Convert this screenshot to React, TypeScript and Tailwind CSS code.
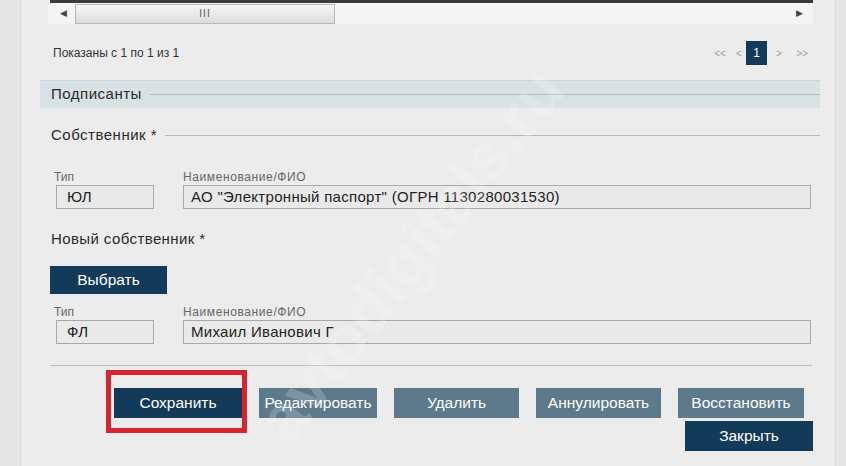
import React from "react";

const field = "h-[24px] border border-[#a9a9a9] bg-[#e9e9e9] flex items-center text-[15px] tracking-[0.3px] text-[#222]";

function Btn({ label, w, dark }: { label: string; w: string; dark?: boolean }) {
  return (
    <div
      className={`${w} h-[30px] flex items-center justify-center text-white text-[15.5px] ${
        dark ? "bg-[#143a5a]" : "bg-[#5c7a8b]"
      }`}
    >
      {label}
    </div>
  );
}

function SectionTitle({ text }: { text: string }) {
  return (
    <div className="flex items-center gap-2 h-full">
      <span className="text-[15px] tracking-[0.5px] text-[#2a2a2a] whitespace-nowrap">{text}</span>
      <div className="flex-1 h-px bg-[#b9b9b9]" />
    </div>
  );
}

function OwnerRow({ type, name }: { type: string; name: string }) {
  return (
    <div className="flex ml-[32px] w-[758px]">
      <div className="w-[130px] flex flex-col">
        <div className="text-[12px] text-[#666] h-[15px] leading-[15px] ml-[1px]">Тип</div>
        <div className={`${field} w-[98px] ml-[3px] pl-[10px]`}>{type}</div>
      </div>
      <div className="flex-1 flex flex-col">
        <div className="text-[12px] tracking-[0.6px] text-[#666] h-[15px] leading-[15px]">Наименование/ФИО</div>
        <div className={`${field} pl-[7px]`}>{name}</div>
      </div>
    </div>
  );
}

export default function App() {
  return (
    <div
      className="relative w-[846px] h-[466px] overflow-hidden bg-[#e6e6e6]"
      style={{ fontFamily: '"Liberation Sans", Arial, sans-serif' }}
    >
      <div className="ml-[20px] w-[816px] h-full bg-[#ececec] border-x border-[#d8d8d8] flex flex-col">
        {/* horizontal scroller of the table above */}
        <div className="ml-[27px] w-[765px] flex flex-col">
          <div className="ml-[2px] h-[3px] bg-[#3a3a3a]" />
          <div className="h-[21px] bg-[#f4f4f4] flex items-center">
            <span className="ml-[12px] text-[9px] text-[#444]">◀</span>
            <div className="ml-[8px] w-[260px] h-[20px] border border-[#b8b8b8] bg-gradient-to-b from-[#f6f6f6] to-[#dcdcdc] flex items-center justify-center">
              <span className="text-[10px] text-[#555] tracking-[1px]">III</span>
            </div>
            <span className="ml-auto mr-[10px] text-[9px] text-[#444]">▶</span>
          </div>
        </div>

        {/* pager */}
        <div className="ml-[32px] w-[760px] h-[54px] flex items-center justify-between">
          <span className="text-[12px] text-[#333] mt-[4px]">Показаны с 1 по 1 из 1</span>
          <div className="flex items-center text-[10px] text-[#8aa2b5] mt-[4px]">
            <span className="w-[24px] text-center">&lt;&lt;</span>
            <span className="w-[14px] text-center">&lt;</span>
            <span className="w-[21px] h-[24px] bg-[#143a5a] text-white text-[12px] flex items-center justify-center">1</span>
            <span className="w-[24px] text-center">&gt;</span>
            <span className="w-[22px] text-center">&gt;&gt;</span>
          </div>
        </div>

        {/* Подписанты */}
        <div className="ml-[19px] w-[780px] h-[28px] mt-[2px] bg-[#d8e1e4] border-t border-[#cfd6d9] pl-[11px]">
          <SectionTitle text="Подписанты" />
        </div>

        <div className="ml-[30px] w-[769px] h-[26px] mt-[14px]">
          <SectionTitle text="Собственник *" />
        </div>

        <div className="mt-[22px]">
          <OwnerRow type="ЮЛ" name={'АО "Электронный паспорт" (ОГРН 1130280031530)'} />
        </div>

        <div className="ml-[30px] mt-[20px] text-[15px] tracking-[0.4px] text-[#2a2a2a] h-[20px] leading-[20px]">
          Новый собственник *
        </div>

        <div className="ml-[29px] mt-[17px] w-[117px] h-[28px] bg-[#143a5a] text-white text-[15.5px] flex items-center justify-center">
          Выбрать
        </div>

        <div className="mt-[11px]">
          <OwnerRow type="ФЛ" name="Михаил Иванович Г" />
        </div>

        <div className="ml-[29px] w-[762px] h-px bg-[#bdbdbd] mt-[21px]" />

        {/* actions */}
        <div className="ml-[93px] mt-[22px] flex gap-[17px]">
          <div className="relative">
            <Btn label="Сохранить" w="w-[128px]" dark />
            <div className="absolute left-[-8px] right-[-5px] top-[-18px] bottom-[-15px] border-[5px] border-[#d7252f]" />
          </div>
          <Btn label="Редактировать" w="w-[118px]" />
          <Btn label="Удалить" w="w-[125px]" />
          <Btn label="Аннулировать" w="w-[125px]" />
          <Btn label="Восстановить" w="w-[126px]" />
        </div>
        <div className="ml-[664px] mt-[3px]">
          <Btn label="Закрыть" w="w-[128px]" dark />
        </div>
      </div>

      {/* watermark */}
      <div className="absolute left-[185px] top-[205px] -rotate-[52deg] text-[66px] font-bold text-white/20 whitespace-nowrap pointer-events-none">
        avtodigitals.ru
      </div>
    </div>
  );
}
